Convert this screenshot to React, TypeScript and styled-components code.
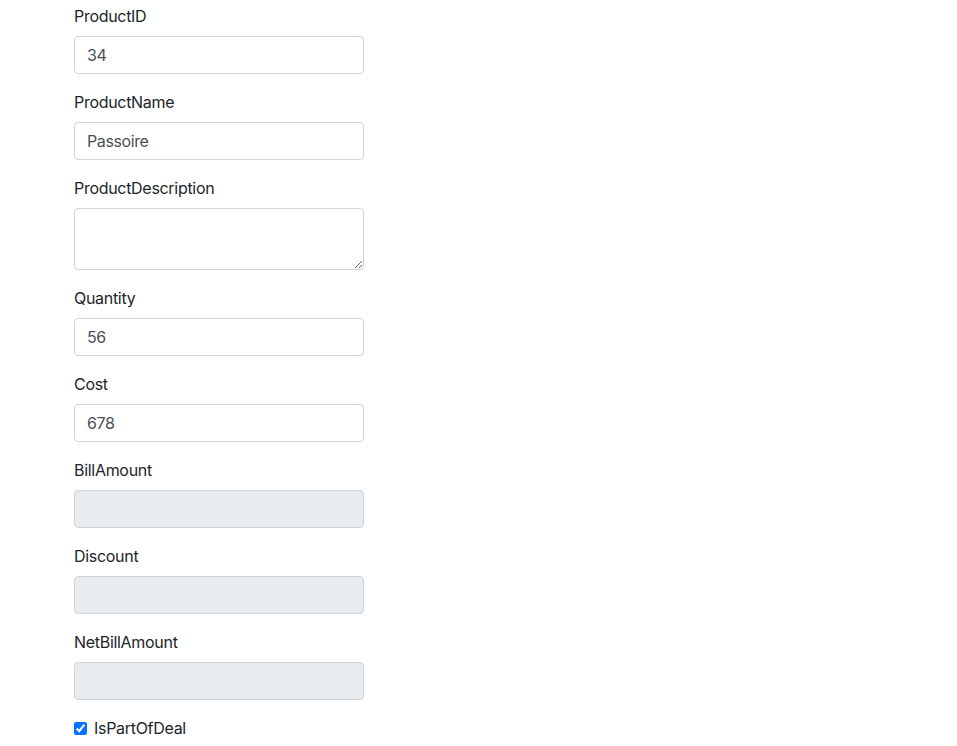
import React from 'react';
import styled, { createGlobalStyle } from 'styled-components';

const GlobalStyle = createGlobalStyle`
    html, body {
        margin: 0;
        padding: 0;
        background: #fff;
    }
    body {
        font-family: Inter, "Noto Sans", "Liberation Sans", sans-serif;
        font-size: 16px;
        line-height: 1.5;
        color: #212529;
        letter-spacing: -0.3px;
    }
    * {
        box-sizing: border-box;
    }
`;

const Form = styled.form`
    width: 290px;
    margin: 0 0 0 74px;
    padding-top: 4px;
`;

const Group = styled.div`
    display: flex;
    flex-direction: column;
    margin-bottom: 16px;
`;

const Label = styled.label`
    display: block;
    margin-bottom: 8px;
    font-size: 16px;
    line-height: 24px;
    color: #212529;
`;

const Input = styled.input<{ $readOnly?: boolean }>`
    display: block;
    width: 100%;
    height: 38px;
    padding: 6px 12px;
    font-family: inherit;
    font-size: 16px;
    line-height: 24px;
    letter-spacing: -0.4px;
    color: #495057;
    background: ${p => (p.$readOnly ? '#e9ecef' : '#fff')};
    border: 1px solid #ced4da;
    border-radius: 4px;
    outline: none;
`;

const TextArea = styled.textarea`
    display: block;
    width: 100%;
    height: 62px;
    padding: 6px 12px;
    font-family: inherit;
    font-size: 16px;
    line-height: 24px;
    color: #495057;
    background: #fff;
    border: 1px solid #ced4da;
    border-radius: 4px;
    outline: none;
    resize: vertical;
`;

const Check = styled.div`
    display: flex;
    align-items: center;
    height: 24px;
`;

const CheckBox = styled.input`
    width: 13px;
    height: 13px;
    margin: 0 7px 0 0;
    accent-color: #0075ff;
`;

const CheckLabel = styled.label`
    font-size: 16px;
    line-height: 24px;
    color: #212529;
`;

const fields: { name: string; value: string; readOnly?: boolean }[] = [
    { name: 'ProductID', value: '34' },
    { name: 'ProductName', value: 'Passoire' },
];

const moreFields: { name: string; value: string; readOnly?: boolean }[] = [
    { name: 'Quantity', value: '56' },
    { name: 'Cost', value: '678' },
    { name: 'BillAmount', value: '', readOnly: true },
    { name: 'Discount', value: '', readOnly: true },
    { name: 'NetBillAmount', value: '', readOnly: true },
];

const Field: React.FC<{ name: string; value: string; readOnly?: boolean }> = ({ name, value, readOnly }) => (
    <Group>
        <Label htmlFor={name}>{name}</Label>
        <Input id={name} defaultValue={value} readOnly={readOnly} $readOnly={readOnly} />
    </Group>
);

const App: React.FC = () => {
    return (
        <>
            <GlobalStyle />
            <Form onSubmit={e => e.preventDefault()}>
                {fields.map(f => (
                    <Field key={f.name} {...f} />
                ))}
                <Group>
                    <Label htmlFor="ProductDescription">ProductDescription</Label>
                    <TextArea id="ProductDescription" rows={2} />
                </Group>
                {moreFields.map(f => (
                    <Field key={f.name} {...f} />
                ))}
                <Check>
                    <CheckBox type="checkbox" id="IsPartOfDeal" defaultChecked />
                    <CheckLabel htmlFor="IsPartOfDeal">IsPartOfDeal</CheckLabel>
                </Check>
            </Form>
        </>
    );
};

export default App;
